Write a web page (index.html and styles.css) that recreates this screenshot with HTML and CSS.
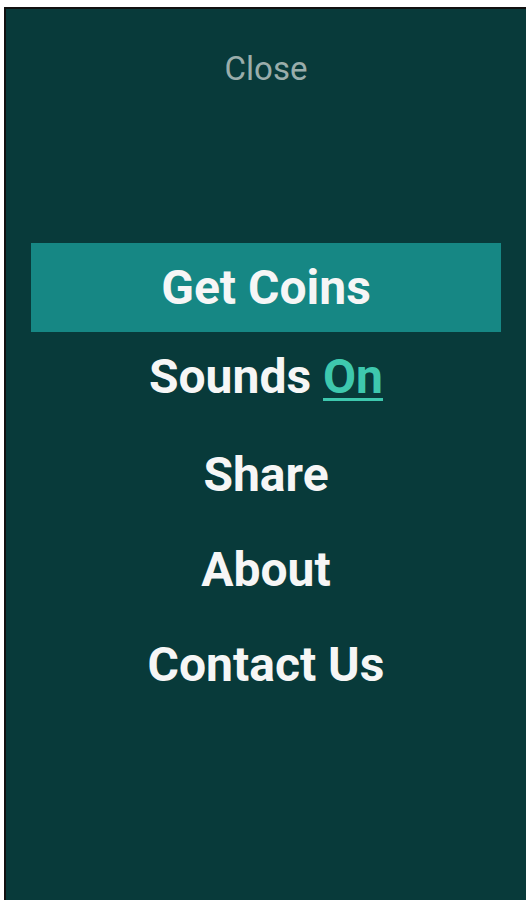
FILE: index.html
```html
<!DOCTYPE html>
<html>
<head>
<meta charset="utf-8">
<link rel="stylesheet" href="styles.css">
</head>
<body>
<div class="screen">
  <div class="close">Close</div>
  <ul class="menu">
    <li class="item active">Get Coins</li>
    <li class="item">Sounds <span class="toggle">On</span></li>
    <li class="item">Share</li>
    <li class="item">About</li>
    <li class="item">Contact Us</li>
  </ul>
</div>
</body>
</html>
```
FILE: styles.css
```css
html, body {
  margin: 0;
  padding: 0;
  background: #ffffff;
  height: 100%;
}
body {
  font-family: Roboto, "Liberation Sans", sans-serif;
  overflow: hidden;
}
.screen {
  margin: 7px 0 0 4px;
  border-top: 2px solid #111;
  border-left: 2px solid #111;
  background: #083a3a;
  height: 900px;
  box-sizing: border-box;
}
.close {
  padding-top: 42px;
  height: 36px;
  line-height: 36px;
  text-align: center;
  font-size: 33px;
  color: #9aadab;
}
.menu {
  list-style: none;
  margin: 156px 25px 0 25px;
  padding: 0;
}
.item {
  height: 95px;
  line-height: 95px;
  text-align: center;
  color: #f6f6f6;
  font-size: 48px;
  font-weight: 700;
}
.item.active {
  height: 89px;
  line-height: 89px;
  background: #168784;
}
.item.active + .item {
  line-height: 89px;
}
.toggle {
  color: #3ec8ae;
  text-decoration: underline;
  text-decoration-thickness: 3px;
  text-underline-offset: 5px;
}
```
